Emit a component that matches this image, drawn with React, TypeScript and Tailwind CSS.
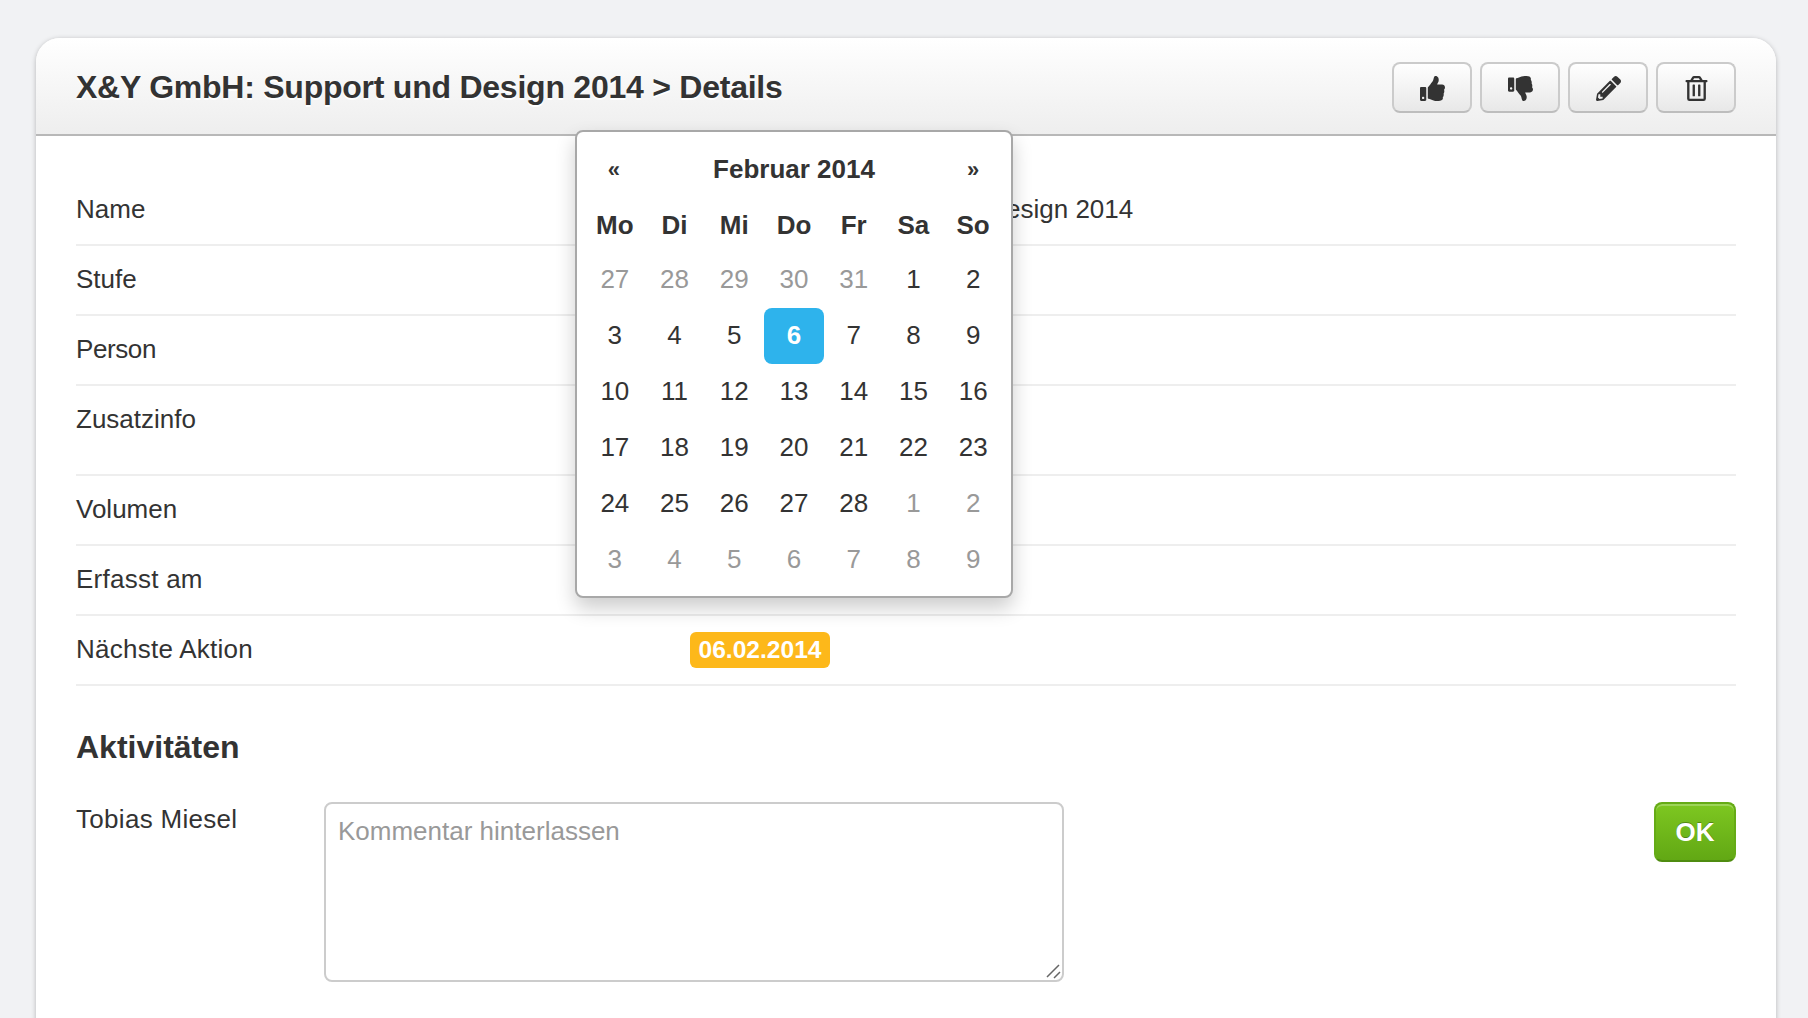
import { FaPencilAlt, FaRegTrashAlt, FaThumbsDown, FaThumbsUp } from "react-icons/fa";

const rows = [
  { label: "Name", value: "X&Y GmbH: Support und Design 2014" },
  { label: "Stufe" },
  { label: "Person", labelClass: "tracking-[-0.4px]" },
  { label: "Zusatzinfo", tall: true },
  { label: "Volumen" },
  { label: "Erfasst am", labelClass: "tracking-[0.25px]" },
  { label: "Nächste Aktion", labelClass: "tracking-[0.25px]", badge: "06.02.2014" },
];

const weekdays = ["Mo", "Di", "Mi", "Do", "Fr", "Sa", "So"];

// [tag, gehört zum aktuellen Monat]
const days: [number, boolean][] = [
  [27, false], [28, false], [29, false], [30, false], [31, false], [1, true], [2, true],
  [3, true], [4, true], [5, true], [6, true], [7, true], [8, true], [9, true],
  [10, true], [11, true], [12, true], [13, true], [14, true], [15, true], [16, true],
  [17, true], [18, true], [19, true], [20, true], [21, true], [22, true], [23, true],
  [24, true], [25, true], [26, true], [27, true], [28, true], [1, false], [2, false],
  [3, false], [4, false], [5, false], [6, false], [7, false], [8, false], [9, false],
];

const ToolButton = ({ children }: { children: React.ReactNode }) => (
  <button className="w-[80px] h-[51px] pt-[1px] flex items-center justify-center rounded-lg border-2 border-[#cbcbcb] border-b-[#bdbdbd] bg-gradient-to-b from-white to-[#e8e8e8] text-[#333] text-[25px]">
    {children}
  </button>
);

const Datepicker = () => (
  <div className="absolute left-[539px] top-[92px] w-[438px] p-2 bg-white border-2 border-[#a8a8a8] rounded-lg shadow-[0_10px_20px_rgba(0,0,0,0.2)]">
    <div className="grid grid-cols-7">
      <div className="h-14 pt-[3px] pr-[2px] flex items-center justify-center font-bold text-[22px]">«</div>
      <div className="col-span-5 h-14 flex items-center justify-center font-bold pt-[2px]">Februar 2014</div>
      <div className="h-14 pt-[3px] flex items-center justify-center font-bold text-[22px]">»</div>
      {weekdays.map((d) => (
        <div key={d} className="h-14 flex items-center justify-center font-bold pt-[2px]">
          {d}
        </div>
      ))}
      {days.map(([day, current], i) => (
        <div
          key={i}
          className={
            i === 10
              ? "h-14 flex items-center justify-center rounded-lg bg-[#2eb3ec] text-white font-bold pb-[2px]"
              : current
                ? "h-14 flex items-center justify-center pb-[2px]"
                : "h-14 flex items-center justify-center text-[#999] pb-[2px]"
          }
        >
          {day}
        </div>
      ))}
    </div>
  </div>
);

export default function App() {
  return (
    <div className="h-[1018px] overflow-hidden bg-[#f1f2f4] pl-9 pr-8 pt-[38px] text-[#333] text-[26px] leading-9 font-['Liberation_Sans',Arial,sans-serif]">
      <div className="relative h-[1100px] bg-white rounded-t-3xl shadow-[0_1px_5px_rgba(0,0,0,0.25)]">
        <header className="h-[98px] flex items-center justify-between px-10 rounded-t-3xl border-b-2 border-[#b8b8b8] bg-gradient-to-b from-white to-[#eeeeee]">
          <h1 className="pt-[2px] text-[32px] font-bold tracking-[-0.24px] [text-shadow:0_2px_0_#fff]">
            X&amp;Y GmbH: Support und Design 2014 &gt; Details
          </h1>
          <div className="flex gap-2 mt-[3px]">
            <ToolButton><FaThumbsUp /></ToolButton>
            <ToolButton><FaThumbsDown /></ToolButton>
            <ToolButton><FaPencilAlt /></ToolButton>
            <ToolButton><FaRegTrashAlt /></ToolButton>
          </div>
        </header>

        <main className="px-10 pt-10">
          {rows.map((row) => (
            <div
              key={row.label}
              className={
                row.tall
                  ? "h-[90px] flex items-start pt-[15px] border-b-2 border-[#eeeeee]"
                  : "h-[70px] flex items-start pt-[15px] border-b-2 border-[#eeeeee]"
              }
            >
              <div className={`w-[614px] shrink-0 ${row.labelClass ?? ""}`}>{row.label}</div>
              {row.value && <div>{row.value}</div>}
              {row.badge && (
                <span className="w-[140px] h-9 mt-px rounded-md bg-[#fdb81a] text-white font-bold text-[24.6px] text-center">
                  {row.badge}
                </span>
              )}
            </div>
          ))}

          <h2 className="mt-[43px] text-[32px] leading-9 font-bold">Aktivitäten</h2>

          <div className="mt-[37px] flex items-start">
            <div className="w-[248px] shrink-0 -mt-px tracking-[0.3px]">Tobias Miesel</div>
            <div className="relative w-[740px] h-[180px]">
              <textarea
                className="w-full h-full block resize-none px-3 py-[9px] border-2 border-[#cccccc] rounded-lg bg-white outline-none placeholder:text-[#999]"
                placeholder="Kommentar hinterlassen"
              />
              <svg className="absolute right-[3px] bottom-[3px]" width="16" height="16" viewBox="0 0 16 16">
                <path d="M2 14L14 2M9 15L15 9" stroke="#666" strokeWidth="1.5" fill="none" />
              </svg>
            </div>
            <button className="ml-auto w-[82px] h-[60px] rounded-lg border-2 border-[#65ab16] border-b-[#4f8c10] bg-gradient-to-b from-[#7ec721] to-[#62a814] text-white font-bold shadow-[inset_0_2px_0_rgba(255,255,255,0.25)] [text-shadow:0_-1px_0_rgba(0,0,0,0.3)]">
              OK
            </button>
          </div>
        </main>

        <Datepicker />
      </div>
    </div>
  );
}
